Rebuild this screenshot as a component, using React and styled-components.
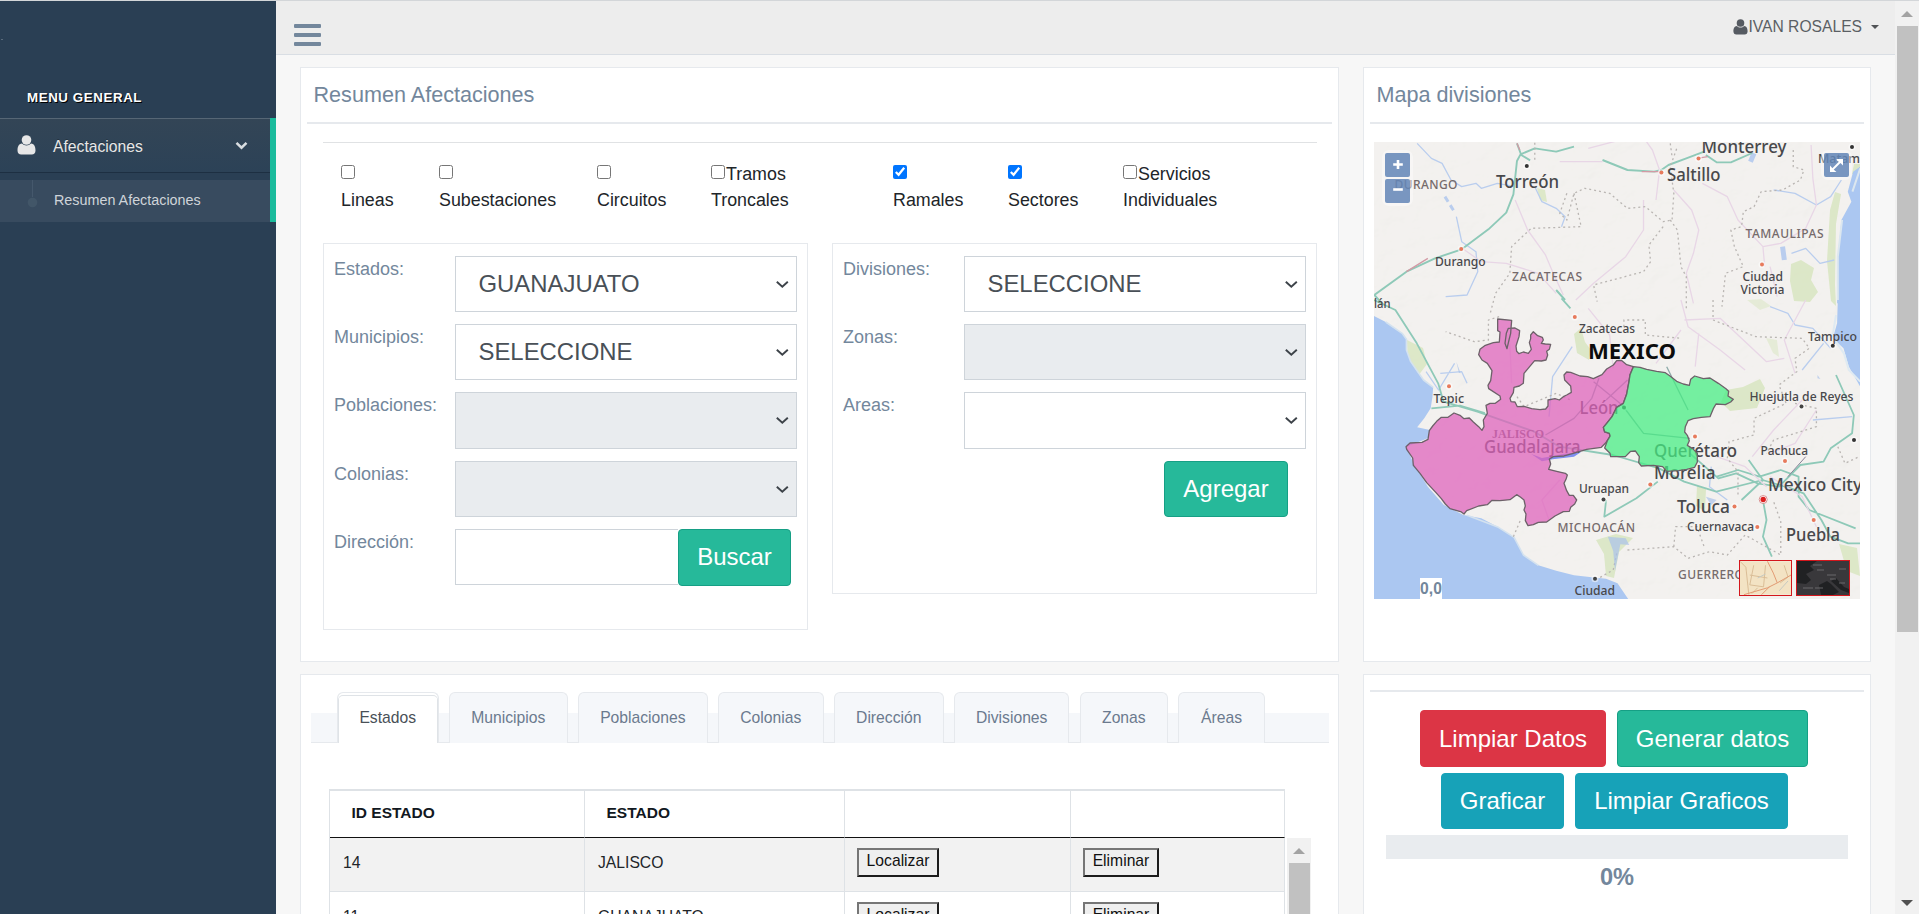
import React from "react";
import styled, { createGlobalStyle, css } from "styled-components";

const GlobalStyle = createGlobalStyle`
  *, *::before, *::after { box-sizing: border-box; }
  body {
    margin: 0;
    overflow: hidden;
    background: #f7f7f7;
    color: #73879c;
    font-family: "Liberation Sans", Arial, Helvetica, sans-serif;
    font-size: 15.7px;
  }
`;

/* ---------- page frame ---------- */

const Page = styled.div`
  display: flex;
  width: 1919px;
  height: 914px;
  overflow: hidden;
  border-top: 1px solid #d3d6d9;
`;

const Sidebar = styled.aside`
  width: 276px;
  flex: none;
  background: #2a3f54;
`;

const SidebarLogo = styled.div`
  height: 86px;
  padding: 38px 0 0 1px;
  i { display: block; width: 2px; height: 1px; background: #5a6b7c; }
`;

const SidebarHeading = styled.h3`
  margin: 0;
  padding-left: 27px;
  height: 31px;
  line-height: 22px;
  font-size: 13.3px;
  font-weight: bold;
  letter-spacing: 0.6px;
  color: #fff;
  text-shadow: 1px 1px #000;
`;

const MenuGroup = styled.div`
  height: 104px;
  border-right: 6px solid #1abb9c;
`;

const MenuItem = styled.a`
  display: flex;
  align-items: center;
  height: 55px;
  padding: 0 22px 0 17px;
  color: #e7e7e7;
  font-size: 15.7px;
  background: linear-gradient(#334556, #2c4257), #2a3f54;
  border-top: 1px solid #566675;
  border-bottom: 1px solid #1d2f42;
  text-shadow: rgba(0, 0, 0, 0.25) 0 -1px 0;
  span { flex: 1; margin-left: 17px; padding-top: 2px; }
  svg:first-child { margin-bottom: 2px; }
`;

const SubMenu = styled.div`
  display: flex;
  align-items: center;
  height: 42px;
  margin-top: 7px;
  padding-left: 26px;
  background: #384b5f;
  color: #cfd4d9;
  font-size: 14.35px;
  svg { margin-right: 15px; }
  span { padding-bottom: 2px; }
`;

const Main = styled.div`
  flex: 1;
  min-width: 0;
`;

const TopBar = styled.header`
  display: flex;
  justify-content: space-between;
  height: 54px;
  padding: 0 16px 0 18px;
  background: #ededed;
  border-bottom: 1px solid #d9dee4;
`;

const MenuToggle = styled.div`
  display: flex;
  flex-direction: column;
  gap: 5px;
  width: 27px;
  padding-top: 23px;
  i { height: 4px; border-radius: 1px; background: #73879c; }
`;

const UserMenu = styled.div`
  display: flex;
  align-items: center;
  height: 52px;
  color: #5b5f64;
  line-height: 54px;
  font-size: 15.65px;
`;

const Caret = styled.i`
  margin: -1px 0 0 9px;
  border: 4.5px solid transparent;
  border-top-color: #515356;
  border-bottom: 0;
`;

const Content = styled.main`
  display: grid;
  grid-template-columns: 1039px 508px;
  grid-template-rows: 595px 400px;
  column-gap: 24px;
  row-gap: 12px;
  padding: 12px 0 0 24px;
`;

const Panel = styled.section`
  min-width: 0;
  background: #fff;
  border: 1px solid #e6e9ed;
  padding: 0 6px;
`;

const PanelTitle = styled.h2`
  margin: 0;
  height: 56px;
  padding-left: 6.5px;
  line-height: 54px;
  font-size: 21.6px;
  font-weight: normal;
  border-bottom: 2px solid #e6e9ed;
`;

/* ---------- filters ---------- */

const FilterBody = styled.div`
  margin: 18px 15px 0 16px;
  border-top: 1px solid #e0e2e4;
`;

const Checks = styled.div`
  display: grid;
  grid-template-columns: 98px 158px 114px 182px 115px 115px auto;
  height: 100px;
  padding: 18px 0 0 18px;
  color: #212529;
  font-size: 17.85px;
  line-height: 26.3px;
  white-space: nowrap;
`;

const Check = styled.label`
  display: block;
  input { width: 14px; height: 14px; margin: 0 1px 0 0; vertical-align: 1px; accent-color: #0075ff; }
`;

const Forms = styled.div`
  display: flex;
  align-items: flex-start;
  justify-content: space-between;
`;

const FormBox = styled.div`
  width: 485px;
  height: ${(p) => p.$height}px;
  padding: 11.9px 10px 0;
  border: 1px solid #e6e9ed;
  display: flex;
  flex-direction: column;
  gap: 12.1px;
`;

const Field = styled.div`
  display: flex;
  height: 56.15px;
  justify-content: ${(p) => (p.$end ? "flex-end" : "flex-start")};
  padding-right: ${(p) => (p.$end ? "18px" : "0")};
  & > label { width: 121px; flex: none; line-height: 26px; font-size: 18px; }
`;

const SelectBox = styled.div`
  display: flex;
  align-items: center;
  justify-content: space-between;
  width: 342px;
  height: 100%;
  padding: 0 6px 0 22.5px;
  border: 1px solid #ced4da;
  background: ${(p) => (p.$disabled ? "#e9ecef" : "#fff")};
  color: #495057;
  font-size: 23.9px;
`;

const TextInput = styled.input`
  width: 223px;
  height: 100%;
  border: 1px solid #ced4da;
  border-right: 0;
  outline: 0;
`;

const tones = {
  green: css`background: #26b99a; border-color: #169f85;`,
  red: css`background: #dc3545; border-color: #dc3545;`,
  teal: css`background: #17a2b8; border-color: #17a2b8;`,
};

const Button = styled.button`
  width: ${(p) => p.$width}px;
  height: ${(p) => p.$height || 56}px;
  padding: 0;
  border: 1px solid;
  border-radius: 4px;
  color: #fff;
  font: 24px "Liberation Sans", Arial, sans-serif;
  white-space: nowrap;
  ${(p) => tones[p.$tone]}
`;

/* ---------- tabs and table ---------- */

const TabBar = styled.nav`
  display: flex;
  align-items: flex-end;
  gap: 10.2px;
  height: 51px;
  margin: 17px 3px 0 4px;
  padding-left: 26px;
  background: linear-gradient(transparent 21px, #f5f7fa 21px);
  border-bottom: 1px solid #e6e9ed;
`;

const Tab = styled.a`
  width: ${(p) => p.$width}px;
  height: 51px;
  margin-bottom: -1px;
  border: 1px solid #e6e9ed;
  border-bottom: 0;
  border-radius: 6px 6px 0 0;
  background: ${(p) => (p.$active ? "#fff" : "#f5f7fa")};
  box-shadow: ${(p) => (p.$active ? "inset 0 2px #fff, inset 0 3px #dfe3e7, inset 1px 0 #dfe3e7, inset -1px 0 #dfe3e7" : "none")};
  color: ${(p) => (p.$active ? "#495057" : "#6b7a8e")};
  font-size: 15.7px;
  line-height: 49px;
  text-align: center;
`;

const TableArea = styled.div`
  display: flex;
  align-items: flex-start;
  margin: 46px 0 0 22px;
`;

const Table = styled.table`
  width: 956px;
  table-layout: fixed;
  border-collapse: separate;
  border-spacing: 0;
  border-left: 1px solid #dee2e6;
  color: #212529;
  font-size: 15.7px;
  th, td { border-right: 1px solid #dee2e6; text-align: left; }
  th {
    height: 49px;
    padding: 0 0 2px 21.5px;
    border-top: 2px solid #dee2e6;
    border-bottom: 1px solid #111;
    color: #111821;
    font-size: 15.5px;
  }
  td { height: 54px; padding: 0 0 3px 13px; border-bottom: 1px solid #dee2e6; vertical-align: middle; }
  tbody tr:nth-child(odd) { background: #f2f2f2; }
`;

const RowButton = styled.button`
  display: block;
  width: ${(p) => p.$width}px;
  height: 29px;
  margin: -2px 0 0 -1px;
  padding: 0 0 2px;
  border: 2px solid;
  border-color: #767676 #1c1c1c #1c1c1c #767676;
  background: #efefef;
  color: #111;
  font: 15.7px "Liberation Sans", Arial, sans-serif;
`;

/* ---------- scrollbars ---------- */

const ScrollTrack = styled.div`
  display: flex;
  flex-direction: column;
  align-items: center;
  flex: none;
  width: 24px;
  height: ${(p) => p.$height};
  margin-top: ${(p) => p.$top || 0}px;
  margin-left: ${(p) => p.$left || 0}px;
  background: #f1f1f1;
`;

const Arrow = styled.i`
  flex: none;
  margin: ${(p) => p.$margin};
  border: 6px solid transparent;
  ${(p) => (p.$down ? "border-top-color: #505050; border-bottom: 0;" : "border-bottom-color: #a3a3a3; border-top: 0;")}
`;

const Thumb = styled.div`
  flex: none;
  width: 21px;
  height: ${(p) => p.$height}px;
  background: #c1c1c1;
`;

/* ---------- map ---------- */

const MapFrame = styled.div`
  position: relative;
  width: 486px;
  height: 457px;
  margin: 18px 0 0 4px;
  overflow: hidden;
  & > svg { display: block; }
`;

const MapControl = styled.div`
  position: absolute;
  left: ${(p) => p.$x}px;
  top: 11px;
  display: grid;
  gap: 2px;
  border-radius: 4px;
  background: rgba(255, 255, 255, 0.4);
  box-shadow: 0 0 0 3px rgba(255, 255, 255, 0.4);
`;

const MapButton = styled.button`
  display: grid;
  place-items: center;
  width: 25px;
  height: 24px;
  padding: 0;
  border: 0;
  border-radius: 2px;
  background: rgba(80, 120, 175, 0.76);
  color: #fff;
`;

const Coordinates = styled.div`
  position: absolute;
  left: 46px;
  bottom: 0;
  width: 22px;
  height: 21px;
  background: #fff;
  font-size: 15.7px;
  font-weight: bold;
  line-height: 21px;
  text-align: center;
`;

const LayerThumbs = styled.div`
  position: absolute;
  right: 10px;
  bottom: 3px;
  display: flex;
  gap: 4px;
  svg { display: block; border: 1px solid #d4161c; }
`;

/* ---------- actions ---------- */

const Rule = styled.div`
  height: 17px;
  border-bottom: 2px solid #e6e9ed;
`;

const ActionRow = styled.div`
  display: flex;
  gap: 11px;
  margin: ${(p) => p.$top}px 0 0 ${(p) => p.$left}px;
`;

const Progress = styled.div`
  height: 24px;
  margin: 6px 16px 0;
  background: #e9ecef;
`;

const Percent = styled.div`
  line-height: 36px;
  text-align: center;
  font-size: 23.6px;
  font-weight: bold;
`;

const Chevron = () => (
  <svg width="15" height="12" viewBox="0 0 15 12" fill="none" stroke="#3d4349" strokeWidth="1.9">
    <path d="M1.800 3.700l5.500 5 5.500-5" />
  </svg>
);

const Person = ({ width, height, color }) => (
  <svg width={width} height={height} viewBox="0 0 19 20" preserveAspectRatio="none" fill={color}>
    <path d="M5 8.600C1.600 8.800.5 12 .5 15.400c0 2.500 1.500 4.100 3.700 4.100h10.600c2.200 0 3.700-1.600 3.700-4.100C18.500 12 17.400 8.800 14 8.600 12.800 9.900 11.300 10.600 9.500 10.600S6.200 9.900 5 8.600z" />
    <circle cx="9.500" cy="5" r="4.800" />
  </svg>
);

const FormRow = ({ label, value, disabled }) => (
  <Field>
    <label>{label}</label>
    <SelectBox $disabled={disabled}>
      <span>{value}</span>
      <Chevron />
    </SelectBox>
  </Field>
);

const CHECKS = [
  ["", "Lineas", false],
  ["", "Subestaciones", false],
  ["", "Circuitos", false],
  ["Tramos", "Troncales", false],
  ["", "Ramales", true],
  ["", "Sectores", true],
  ["Servicios", "Individuales", false],
];

const TABS = [
  ["Estados", 101.5],
  ["Municipios", 119],
  ["Poblaciones", 130],
  ["Colonias", 105.5],
  ["Dirección", 110],
  ["Divisiones", 115.5],
  ["Zonas", 88.5],
  ["Áreas", 86.5],
];

const ROWS = [["14", "JALISCO"], ["11", "GUANAJUATO"]];

/* text, x, baseline, width, size, kind */
const PLACES = [
  ["Monterrey", 327.5, 10.5, 85, 17.5],
  ["Torreón", 122, 46, 63, 17.5],
  ["Saltillo", 293, 38.5, 53.5, 17.5],
  ["DURANGO", 20.5, 47, 63, 12, "state"],
  ["Durango", 61, 124, 50.6, 13],
  ["ZACATECAS", 138, 139, 70, 12, "state"],
  ["TAMAULIPAS", 371.5, 95.5, 78, 12, "state"],
  ["Ciudad", 368.5, 139, 40.5, 13],
  ["Victoria", 366.5, 152, 44, 13],
  ["Matam", 444, 21, 42, 13],
  ["lán", 0, 166, 16.5, 13],
  ["Zacatecas", 205, 190.5, 56, 13],
  ["MEXICO", 214, 217, 88, 21, "country"],
  ["Tampico", 434, 198.5, 49, 13],
  ["Tepic", 59.5, 260.5, 30.5, 13],
  ["Huejutla de Reyes", 375.5, 258.5, 104, 13],
  ["León", 205.5, 272, 39, 17.5],
  ["JALISCO", 118, 295.5, 52, 12, "serif"],
  ["Guadalajara", 110, 310.5, 96.5, 17.5],
  ["Querétaro", 280, 315, 83, 17.5],
  ["Morelia", 280, 337, 61.5, 17.5],
  ["Pachuca", 386.5, 312.5, 47.5, 13],
  ["Uruapan", 205, 351, 50, 13],
  ["Mexico City", 394, 349, 94, 17.5],
  ["Toluca", 303, 371, 53, 17.5],
  ["Cuernavaca", 313, 389, 67, 13],
  ["Puebla", 412, 398.5, 54, 17.5],
  ["MICHOACÁN", 183.5, 390, 77.5, 12, "state"],
  ["GUERRERO", 304, 437, 66, 12, "state"],
  ["Ciudad", 200.5, 453, 40.5, 13],
];

const DOTS = [
  [152.8, 24, "#333"], [287.4, 30.5, "#e77a5c"], [324.5, 16.5, "#e77a5c"], [87.2, 107, "#e77a5c"],
  [388, 122.5, "#e77a5c"], [478, 5, "#333"], [200.8, 175, "#e77a5c"], [458.8, 203.7, "#333"],
  [75, 244.3, "#e77a5c"], [427.5, 264.5, "#444"], [250, 265.5, "#333"], [321, 294.5, "#e77a5c"],
  [411, 319, "#e77a5c"], [276.3, 342.5, "#e77a5c"], [229.5, 357.5, "#444"], [360.5, 364.5, "#e77a5c"],
  [383.3, 385, "#e77a5c"], [439.7, 378, "#e77a5c"], [221, 436.7, "#444"], [480, 298, "#333"],
];

const labelStyle = {
  state: { fill: "#756a6b", fontWeight: 500 },
  country: { fill: "#0c0c0c", fontWeight: 700 },
  serif: { fill: "#6e5c66", fontWeight: 700, fontFamily: "Liberation Serif, serif" },
};

const MapLine = styled.path`
  fill: none;
  stroke: ${(p) => p.$c};
  stroke-width: ${(p) => p.$w || 1.3};
  stroke-dasharray: ${(p) => p.$dash || "none"};
  stroke-linejoin: round;
  vector-effect: non-scaling-stroke;
`;

const GREEN = "#8ec9b8";
const LILAC = "#e8d6e6";
const RIVER = "#b9cdee";
const BORDER = "#b9b5b2";

const NORTH = "translate(-13.9 -142) scale(.3565 .33333)";
const SOUTH = "translate(-13.9 158) scale(.3565 .33333)";

const RegionMap = () => (
  <svg width="486" height="457" viewBox="0 0 486 457">
    <defs>
      <filter id="relief" x="0" y="0" width="100%" height="100%">
        <feTurbulence type="fractalNoise" baseFrequency=".035 .045" numOctaves="4" seed="8" />
        <feDiffuseLighting lightingColor="#fff" surfaceScale="1.3" diffuseConstant="1.25">
          <feDistantLight azimuth="225" elevation="55" />
        </feDiffuseLighting>
      </filter>
    </defs>
    <rect width="486" height="457" fill="#f1efec" />
    <rect width="486" height="457" filter="url(#relief)" opacity=".16" />

    {/* vegetation */}
    <g fill="#d5e4bb" opacity=".75">
      <path d="M33 198l16 8 4 16-9 12 4 14-9 3-5-22zM200 192l7-6 4 14 6 8-2 10-12-7z" />
      <path d="M417 122l10-4 13 8-3 12 7 12-8 10-16-1-4-20zM456 68l5-18 6 2-5 30-1 60 1 22-5-5-4-40z" />
      <path d="M352 248l17-3 17-8 5 9-8 20-27 3-9-9zM222 398l20-6 17 4-14 14-5 26-8-2-2-22z" />
      <path d="M323 344l9 3-1 22-9-5zM465 402l18 4 3 28-13-5zM480 22h6v12l-8-2zM163 46l8 2 2 12-7-2z" />
      <path d="M373 158l14-1 10 7-11 4zM392 196l11 2 2 17-6-4z" opacity=".6" />
    </g>

    <g transform={NORTH}>
      <MapLine $c={RIVER} d="M160 430l40 45 30 15 25 50 30 20 40-10 15 15 45-15 50 10M270 650l15 75 40 30 5 60-30 70-60 5M490 560l20 45 40 20 25 25-10 30M1160 570l60 10 60 35 40-25 30-50M1210 760l40-15 40 45 40-10" />
      <MapLine $c={RIVER} $w={5} d="M1105 460l-10 25M1185 740l5 40" />
      <MapLine $c={RIVER} $w={3} $dash="6 4" d="M238 590l28 48" />
      <MapLine $c={GREEN} d="M40 885l90-70 80-40 75-27 75-60 50-50 20-55 10-100 10-20 40-18 60 10 50-15M440 430l12 35 25 16M680 480l70 30 75 5 20-5 20-15 50-20 50-20M970 465l30 22 40 0 60-28M550 870l25 30M40 885l25 30" $w={1.9} />
      <MapLine $c="#d29aa5" d="M130 815l60-40M790 515l55 0M945 475l30-5M440 430l8 20" />
      <MapLine $c={LILAC} d="M435 600l35 90 50 75 20 50 30 70M280 740l60 45 70 5 90 30 50 60M605 900l50-50 90-80 50-80 0-90M560 485l120 0M640 445l90-25 70 0 20 30 20 60 -10 90M880 570l50 60 20 60-15 70-20 60 20 90M960 550l70 40 30 70 70 80 5 60M1130 740l50-10 70-45 30-70-10-80-5-100M1150 800l20 90" />
      <MapLine $c={BORDER} $dash="2 3" d="M490 428l0 60M580 580l-20 60 20 20 20-80 30-15 70 15 50 45 50-5 50 45 25-5 5-80-10-80 20-60M600 580l20 100-140 5-55 55-5 80-40 60-15 60M1215 450v50l30 10-10 30-50 30-60 5-20 45-30 15-5 45-30 10 10 50 25 60-50 20-10 100M870 660l20 30 10 110 15 30 0 100M850 680l-40 55 5 50-20 30-140 40 10 50M870 430l5 40" />
      <path d="M1403 500l-20 15-15 60 10 30-28 55-10 110-2 140h65z" fill="#abc7f1" />
      <MapLine $c="#dce7ef" $w={2} d="M1403 505l-22 70M1340 900l0-130 12-110" />
    </g>

    <g transform={SOUTH}>
      <path
        d="M39 48L72 66L100 88L118 100L130 118L130 150L142 185L160 215L178 240L205 262L203 290L198 325L180 355L160 382L196 390L190 415L130 440L150 490L190 560L235 615L290 645L340 655L388 682L432 712L458 765L500 796L550 812L600 826L650 832L690 836L722 850L752 897H39Z"
        fill="#abc7f1"
      />
      <path d="M1340 0l-2 70-12 45 30 30 15 55 32 60V0z" fill="#abc7f1" />
      <MapLine $c="#dfeaf2" $w={2} d="M1335 45l-10 65 32 50 14 50 32 35" />
      <MapLine $c="#d4e2ef" $w={1.6} d="M72 66L118 100L130 118L130 150L142 185L178 240L205 262M300 646L388 682L432 712L458 765L500 796" />
      <MapLine $c={RIVER} d="M265 190l-45 80-35-55M225 220l60-5 15 35M530 350l10-120 55-90M1150 20l50 20 20 35 50 10 50 60M1030 600l-50-40 5-60M1380 350l-110 10M1240 210l60-80" />
      <MapLine $c={GREEN} $w={1.8} d="M39 0l60 30 60 100 60 120 15 55 95 30 160 60 70 45 150 25 130 40 70 40 90 30 130-35 80 25 35 15 50 80 25 50 50 20 60 0M200 325l80-8 70 22M590 25l-25-30M1335 225l50 120-5 55-60 45-20 40-65 10-60 65-60-10-60-30-50 15-80-75M1000 530l60-20 60 20 60-20 50 20 0 60 30 40 130 55M1130 600l10 60-10 50 25 60M1090 480l40 60 -60 60M690 600l-5 50 90-55 60-50" />
      <MapLine $c="#8caaa8" $w={1.3} d="M655 245l80 70 60 85 130 15M520 405l80-50 50-60 20-60M860 200l60 130M690 300l60-60" />
      <MapLine $c={LILAC} d="M640 25l60 80 10 100M900 0l20 80 90 70 70 60M900 90l-70 100M950 100l-10 100M1250 0l-60 120 30 100M1240 300l-80 90-60 80M420 130l5 120M910 60l100-5 130 130 50-10M1000 470l80 30 60 60M1150 530l90 60 40 90M560 540l-50 60 20 60M1280 330l-60 100-70 30" />
      <MapLine $c={BORDER} $dash="2 3" d="M390 50l-30 10 0 60-40 5-80-30M740 80l0-20 60 0 0 45 100 10M990 0l0 60 120 50 130 5 20 30-40 30 5 40-50 40 20 55-90 45 0 50-70 20-5 50 30 40 0 70M1220 310l60 15 0 55-120 40-20 40M440 290l20 30 90-40 40 20M1340 440l20 50 40-20M750 750l130-10 40 35 60-20 50 10 50-60 100 60 0-100-20-60M880 740l5-60 60 0 20 60M720 760l-10 50-50 30M430 710l20-50" />
      <MapLine $c="#8a8298" $w={1} d="M1200 530l50-60" />
      <path d="M1283 225l8 12-8-2zM270 185l12 35-5-2zM970 590l30 10-15 15zM695 710l50 5 10 20-25-2-15 80-5-60z" fill="#a9c2e9" opacity=".7" />
      <path d="M480 462l30 12 60-12 50-6-20 14-60 8-30 6z" fill="#7f8ff0" />
    </g>

    {DOTS.map(([x, y, c]) => (
      <g key={`${x}-${y}`}>
        <circle cx={x} cy={y} r="3.6" fill="#fff" opacity=".5" />
        <circle cx={x} cy={y} r="2" fill={c} />
      </g>
    ))}
    <circle cx="389.200" cy="357.500" r="4" fill="#fff" stroke="#c66" strokeWidth=".7" />
    <circle cx="389.200" cy="357.500" r="2.700" fill="#dc2020" />

    <g fontFamily="Noto Sans, Open Sans, sans-serif" fill="#48484b" fontWeight="500">
      {PLACES.map(([text, x, y, width, size, kind]) => (
        <text
          key={text + x}
          x={x}
          y={y}
          fontSize={size}
          textLength={width}
          lengthAdjust={kind === "state" ? "spacing" : "spacingAndGlyphs"}
          {...(labelStyle[kind] || {})}
        >
          {text}
        </text>
      ))}
    </g>

    <g transform="translate(26 168) scale(.33333)" stroke="#6d6169" strokeWidth="1.300" strokeLinejoin="round" fillOpacity=".74">
      <path
        vectorEffect="non-scaling-stroke"
        fill="#de62bb"
        d="M293 27L335 31L333 55L332 70L327 90L321 116L315 100L319 70L325 55L345 54L359 62L357 80L348 108L350 124L357 131L370 126L385 130L394 118L388 98L392 86L392 75L400 65L413 77L427 82L430 90L424 100L436 102L452 103L448 118L440 124L443 135L438 150L424 153L404 152L382 178L372 190L370 220L358 228L342 232L340 248L330 265L333 275L345 276L352 290L372 289L395 296L420 299L437 297L444 288L444 270L465 266L478 270L490 260L500 255L514 247L512 228L494 210L492 195L500 186L512 187L540 198L563 200L580 206L606 194L620 177L640 165L650 152L664 151L680 164L700 170L690 194L687 214L680 252L670 280L650 292L636 320L620 340L610 352L614 366L628 370L630 380L616 400L604 412L560 418L520 430L492 438L460 440L448 447L452 462L446 478L470 484L496 490L502 495L498 508L492 520L500 542L508 556L520 556L530 570L524 582L512 592L508 604L490 605L465 618L440 636L415 637L400 644L384 647L376 632L378 612L372 600L376 588L372 570L362 562L350 554L330 569L300 572L276 571L262 584L236 588L200 602L192 612L184 606L150 596L136 582L124 566L108 548L80 518L60 490L40 466L38 444L20 418L18 410L30 399L66 397L84 388L88 362L98 348L110 334L124 322L144 322L162 309L180 316L192 326L208 324L220 336L236 350L246 361L252 350L250 330L262 310L258 286L270 280L286 280L302 268L300 258L266 236L264 226L272 212L276 182L262 160L246 150L236 134L240 118L256 106L280 98L298 96L300 66L293 62Z"
      />
      <path
        vectorEffect="non-scaling-stroke"
        fill="#48ed84"
        d="M700 170L720 172L740 178L770 184L796 188L810 198L830 214L850 222L868 226L872 208L884 198L910 206L930 204L955 220L978 236L986 244L984 258L1000 268L992 276L976 284L948 282L940 296L930 320L904 322L880 326L864 332L856 350L854 366L862 376L868 392L862 406L878 416L892 430L892 456L884 472L860 478L836 482L800 484L788 470L760 466L724 468L716 458L718 440L706 423L692 424L676 440L632 440L630 430L614 414L622 392L630 378L628 370L614 366L610 352L620 340L636 320L650 292L670 280L680 252L687 214L690 194Z"
      />
    </g>
  </svg>
);

const MapPanel = () => (
  <MapFrame>
    <RegionMap />
    <MapControl $x={11}>
      <MapButton aria-label="Acercar">
        <svg width="12" height="12" viewBox="0 0 12 12" stroke="#fff" strokeWidth="2.600"><path d="M6 1v9M1.200 5.500h9.600" /></svg>
      </MapButton>
      <MapButton aria-label="Alejar">
        <svg width="12" height="12" viewBox="0 0 12 12" stroke="#fff" strokeWidth="2.600"><path d="M1.200 4.500h9.600" /></svg>
      </MapButton>
    </MapControl>
    <MapControl $x={450}>
      <MapButton aria-label="Pantalla completa">
        <svg width="15" height="15" viewBox="0 0 15 15" fill="#fff" stroke="#fff" strokeWidth="2">
          <path d="M3.500 11.500l8-8" />
          <path d="M7.500 1h6.500v6.500l-2-2-4-3zM1 7.500v6.500h6.500l-3-2.500z" stroke="none" />
        </svg>
      </MapButton>
    </MapControl>
    <Coordinates>0,0</Coordinates>
    <LayerThumbs>
      <svg width="53" height="36" viewBox="0 0 52 34">
        <rect width="52" height="34" fill="#f3e3c4" />
        <path d="M0 0l6 6 3 28M14 4l-4 20 14 2 2-22M10 14l18 3M45 4l4 12-8 6M18 27l-6 6" fill="none" stroke="#d9bd96" />
        <path d="M28 0l6 12 4 10-10 5-24 7M38 22l14-8M30 26l-8 8" fill="none" stroke="#e19a72" />
        <path d="M18 17l8-4M40 30l9-10" stroke="#c5c9c2" />
      </svg>
      <svg width="54" height="36" viewBox="0 0 52 34">
        <rect width="52" height="34" fill="#39383b" />
        <path d="M0 0h20l-7 5 4 4-8 4 5 6-5 4-9-1zM22 24l8-4 4 3 8 8-6 3h-12zM34 20l5-3 8 9 5 2v4l-8-3z" fill="#202123" />
        <path d="M16 4h9M20 9h7M30 14h9M42 8h7M33 18h6M6 27h10M18 27h8M42 22h6" stroke="#77777a" strokeWidth=".8" />
      </svg>
    </LayerThumbs>
  </MapFrame>
);

export default function App() {
  return (
    <>
      <GlobalStyle />
      <Page>
        <Sidebar>
          <SidebarLogo><i /></SidebarLogo>
          <SidebarHeading>MENU GENERAL</SidebarHeading>
          <MenuGroup>
            <MenuItem>
              <Person width={19} height={20} color="#e7e7e7" />
              <span>Afectaciones</span>
              <svg width="13" height="9" viewBox="0 0 13 9" fill="none" stroke="#d9dde1" strokeWidth="2.600"><path d="M1.500 1.900l5 4.700 5-4.700" /></svg>
            </MenuItem>
            <SubMenu>
              <svg width="13" height="42" viewBox="0 0 13 42">
                <path d="M6.500 0v17" stroke="#45586c" />
                <circle cx="6.500" cy="22.500" r="4.800" fill="#425668" />
              </svg>
              <span>Resumen Afectaciones</span>
            </SubMenu>
          </MenuGroup>
        </Sidebar>

        <Main>
          <TopBar>
            <MenuToggle><i /><i /><i /></MenuToggle>
            <UserMenu>
              <Person width={15} height={16} color="#565b62" />
              IVAN ROSALES
              <Caret />
            </UserMenu>
          </TopBar>

          <Content>
            <Panel>
              <PanelTitle>Resumen Afectaciones</PanelTitle>
              <FilterBody>
                <Checks>
                  {CHECKS.map(([first, second, checked]) => (
                    <Check key={second}>
                      <input type="checkbox" defaultChecked={checked} />
                      {first}
                      <br />
                      {second}
                    </Check>
                  ))}
                </Checks>
                <Forms>
                  <FormBox $height={387}>
                    <FormRow label="Estados:" value="GUANAJUATO" />
                    <FormRow label="Municipios:" value="SELECCIONE" />
                    <FormRow label="Poblaciones:" disabled />
                    <FormRow label="Colonias:" disabled />
                    <Field>
                      <label>Dirección:</label>
                      <TextInput />
                      <Button $tone="green" $width={113} $height={57}>Buscar</Button>
                    </Field>
                  </FormBox>
                  <FormBox $height={351}>
                    <FormRow label="Divisiones:" value="SELECCIONE" />
                    <FormRow label="Zonas:" disabled />
                    <FormRow label="Areas:" />
                    <Field $end>
                      <Button $tone="green" $width={124}>Agregar</Button>
                    </Field>
                  </FormBox>
                </Forms>
              </FilterBody>
            </Panel>

            <Panel>
              <PanelTitle>Mapa divisiones</PanelTitle>
              <MapPanel />
            </Panel>

            <Panel>
              <TabBar>
                {TABS.map(([name, width], i) => (
                  <Tab key={name} $width={width} $active={i === 0}>{name}</Tab>
                ))}
              </TabBar>
              <TableArea>
                <Table>
                  <colgroup>
                    <col width="255" />
                    <col width="260" />
                    <col width="226" />
                    <col />
                  </colgroup>
                  <thead>
                    <tr><th>ID ESTADO</th><th>ESTADO</th><th /><th /></tr>
                  </thead>
                  <tbody>
                    {ROWS.map(([id, name]) => (
                      <tr key={id}>
                        <td>{id}</td>
                        <td>{name}</td>
                        <td><RowButton $width={82}>Localizar</RowButton></td>
                        <td><RowButton $width={76}>Eliminar</RowButton></td>
                      </tr>
                    ))}
                  </tbody>
                </Table>
                <ScrollTrack $height="120px" $top={49} $left={2}>
                  <Arrow $margin="10px 0 9px" />
                  <Thumb $height={95} />
                </ScrollTrack>
              </TableArea>
            </Panel>

            <Panel>
              <Rule />
              <ActionRow $top={18} $left={50}>
                <Button $tone="red" $width={186} $height={57}>Limpiar Datos</Button>
                <Button $tone="green" $width={191} $height={57}>Generar datos</Button>
              </ActionRow>
              <ActionRow $top={6} $left={71}>
                <Button $tone="teal" $width={123}>Graficar</Button>
                <Button $tone="teal" $width={213}>Limpiar Graficos</Button>
              </ActionRow>
              <Progress />
              <Percent>0%</Percent>
            </Panel>
          </Content>
        </Main>

        <ScrollTrack $height="913px">
          <Arrow $margin="10px 0 9px" />
          <Thumb $height={606} />
          <Arrow $down $margin="auto 0 8px" />
        </ScrollTrack>
      </Page>
    </>
  );
}
